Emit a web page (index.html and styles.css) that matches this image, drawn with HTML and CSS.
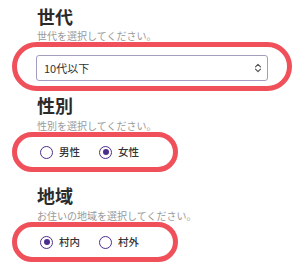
FILE: index.html
```html
<!DOCTYPE html>
<html lang="ja">
<head>
<meta charset="utf-8">
<link rel="stylesheet" href="styles.css">
</head>
<body>
<div class="form">
  <section class="field field-age">
    <h2 class="title">世代</h2>
    <p class="desc">世代を選択してください。</p>
    <div class="ring ring-wide">
      <div class="select">
        <span class="select-value">10代以下</span>
        <svg class="chev" width="8" height="10" viewBox="0 0 8 10"><path d="M1.5 3.8 L4 1.3 L6.5 3.8 M1.5 6.2 L4 8.7 L6.5 6.2" fill="none" stroke="#555" stroke-width="1.2" stroke-linecap="round" stroke-linejoin="round"/></svg>
      </div>
    </div>
  </section>
  <section class="field field-sex">
    <h2 class="title">性別</h2>
    <p class="desc">性別を選択してください。</p>
    <div class="ring ring-radio">
      <label class="opt"><span class="radio"></span><span class="lbl">男性</span></label>
      <label class="opt"><span class="radio checked"></span><span class="lbl">女性</span></label>
    </div>
  </section>
  <section class="field field-area">
    <h2 class="title">地域</h2>
    <p class="desc">お住いの地域を選択してください。</p>
    <div class="ring ring-radio">
      <label class="opt"><span class="radio checked"></span><span class="lbl">村内</span></label>
      <label class="opt"><span class="radio"></span><span class="lbl">村外</span></label>
    </div>
  </section>
</div>
</body>
</html>
```
FILE: styles.css
```css
* { box-sizing: border-box; }
html, body { margin: 0; padding: 0; background: #fff; }
body {
  width: 300px;
  height: 271px;
  overflow: hidden;
  font-family: "Noto Sans CJK JP", "Noto Sans", sans-serif;
  color: #2f2f2f;
}
.form { padding: 4px 8px 0 12px; }
.field { display: flex; flex-direction: column; align-items: flex-start; }
.field-age { margin-bottom: 2px; }
.field-sex { margin-bottom: 11px; }
.title {
  margin: 0 0 0 25px;
  font-size: 18px;
  line-height: 24px;
  font-weight: 700;
  color: #2b2b2b;
}
.desc {
  margin: 2px 0 0 25px;
  font-size: 10px;
  line-height: 12px;
  color: #9a9a9a;
}
.field-sex .desc, .field-area .desc { margin-top: 3px; }
.ring {
  border: 5px solid #ef505a;
  border-radius: 26px;
}
.ring-wide {
  width: 280px;
  padding: 8px 19px 5px 19px;
}
.select {
  height: 26px;
  border: 1px solid #a59dbf;
  border-radius: 3px;
  display: flex;
  align-items: center;
  justify-content: space-between;
  padding: 0 5px 0 7px;
  background: #fff;
}
.select-value { font-size: 11px; color: #333; }
.chev { display: block; }
.ring-radio {
  display: inline-flex;
  align-items: center;
  height: 40px;
  padding: 0 34px 0 23px;
  gap: 19px;
}
.opt { display: flex; align-items: center; gap: 6px; }
.radio {
  width: 13px;
  height: 13px;
  border: 1.5px solid #4b2d8c;
  border-radius: 50%;
  display: flex;
  align-items: center;
  justify-content: center;
  background: #fff;
}
.radio.checked::after {
  content: "";
  width: 6px;
  height: 6px;
  border-radius: 50%;
  background: #4b2d8c;
}
.lbl { font-size: 10.5px; line-height: 14px; color: #333; font-weight: 500; }
```
